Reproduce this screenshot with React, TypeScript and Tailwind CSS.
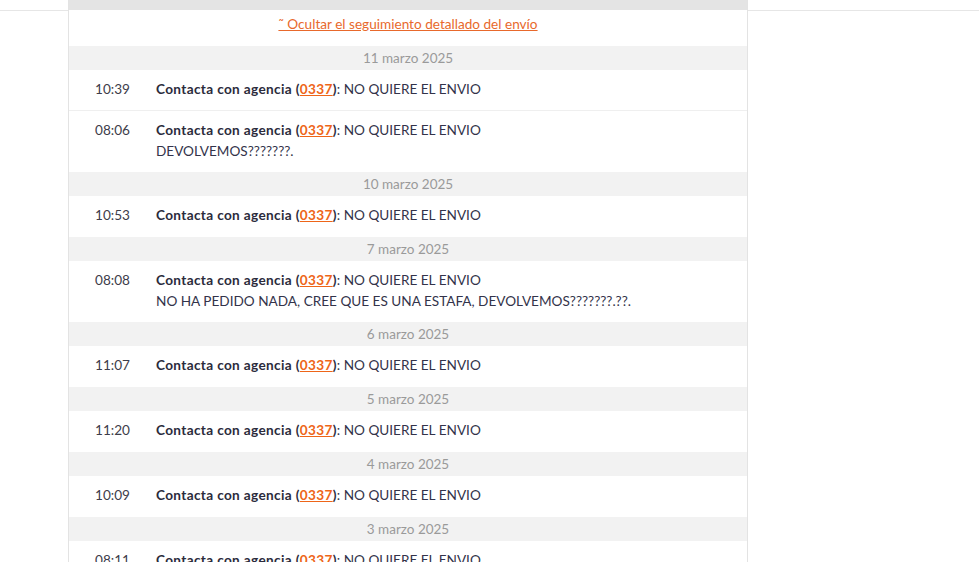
import React from "react";

type Event = { time: string; extra?: string };
type Day = { date: string; events: Event[] };

const days: Day[] = [
  {
    date: "11 marzo 2025",
    events: [{ time: "10:39" }, { time: "08:06", extra: "DEVOLVEMOS???????." }],
  },
  { date: "10 marzo 2025", events: [{ time: "10:53" }] },
  {
    date: "7 marzo 2025",
    events: [
      {
        time: "08:08",
        extra: "NO HA PEDIDO NADA, CREE QUE ES UNA ESTAFA, DEVOLVEMOS???????.??.",
      },
    ],
  },
  { date: "6 marzo 2025", events: [{ time: "11:07" }] },
  { date: "5 marzo 2025", events: [{ time: "11:20" }] },
  { date: "4 marzo 2025", events: [{ time: "10:09" }] },
  { date: "3 marzo 2025", events: [{ time: "08:11" }] },
];

function EventRow({ ev, last }: { ev: Event; last: boolean }) {
  return (
    <div
      className={`flex pt-[9px] leading-[21px] text-[13.6px] ${
        ev.extra ? "h-[61px]" : "h-[41px]"
      } ${last ? "" : "border-b border-[#efefef]"}`}
    >
      <div className="w-[87px] shrink-0 text-center text-[#3d3d4a]">{ev.time}</div>
      <div className="text-[#33334a]">
        <span className="font-bold tracking-[0.35px] text-[#2b2b3c]">
          Contacta con agencia (
          <a href="#" className="text-[#ee6518] underline">
            0337
          </a>
          )
        </span>
        : NO QUIERE EL ENVIO
        {ev.extra && <div>{ev.extra}</div>}
      </div>
    </div>
  );
}

export default function App() {
  return (
    <div
      className="h-[562px] overflow-hidden bg-white relative"
      style={{ fontFamily: "Lato, 'Open Sans', sans-serif" }}
    >
      <div className="absolute left-0 right-0 top-[10px] border-t border-[#e6e6e6]" />
      <div className="relative ml-[68px] w-[680px] border-x border-[#e3e3e3] bg-white">
        <div className="h-[10px] bg-[#e4e4e4]" />
        <div className="h-[36px] pt-[4px] text-center leading-[21px] text-[13.6px]">
          <a href="#" className="text-[#e8692c] underline">
            ˜ Ocultar el seguimiento detallado del envío
          </a>
        </div>
        {days.map((d) => (
          <div key={d.date}>
            <div className="h-[24px] bg-[#f2f2f2] flex items-center justify-center text-[13.5px] text-[#9a9a9a]">
              {d.date}
            </div>
            {d.events.map((ev, i) => (
              <EventRow key={ev.time} ev={ev} last={i === d.events.length - 1} />
            ))}
          </div>
        ))}
      </div>
    </div>
  );
}
